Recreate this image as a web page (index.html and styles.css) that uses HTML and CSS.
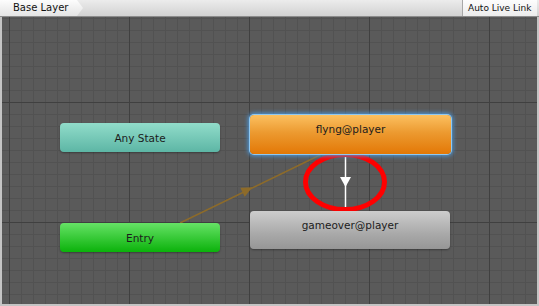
FILE: index.html
```html
<!DOCTYPE html>
<html>
<head>
  <title>Animator - Base Layer</title>
  <link rel="stylesheet" href="styles.css">
</head>
<body>
  <div class="window">
    <div class="toolbar">
      <div class="tab">Base Layer</div>
      <div class="live-link">Auto Live Link</div>
    </div>
    <div class="canvas">
      <svg class="links" width="535" height="287">
        <!-- entry -> flyng transition -->
        <line x1="178" y1="206" x2="318" y2="138" stroke="#8d6b2a" stroke-width="1.5"/>
        <polygon points="-5,-5 6,0 -5,5" fill="#8d6b2a" transform="translate(245 173) rotate(-26)"/>
        <!-- flyng -> gameover transition -->
        <line x1="343.5" y1="137" x2="343.5" y2="194" stroke="#ffffff" stroke-width="1.5"/>
        <polygon points="338,160 349,160 343.5,170" fill="#ffffff"/>
        <ellipse cx="343" cy="165" rx="39.5" ry="27.5" fill="none" stroke="#ff0000" stroke-width="5"/>
      </svg>
      <div class="node any-state">Any State</div>
      <div class="node entry">Entry</div>
      <div class="node state selected">flyng@player</div>
      <div class="node state gameover">gameover@player</div>
    </div>
  </div>
</body>
</html>
```
FILE: styles.css
```css
html, body {
  margin: 0;
  height: 100%;
}

body {
  font-family: "Lucida Grande", "DejaVu Sans", sans-serif;
  background-color: #c4c4c4;
}

.window {
  display: flex;
  flex-direction: column;
  height: 306px;
  width: 539px;
}

.toolbar {
  display: flex;
  justify-content: space-between;
  height: 17px;
  background: linear-gradient(#ececec, #d2d2d2);
  border-bottom: 1px solid #8c8c8c;
  box-sizing: border-box;
}

.tab {
  width: 70px;
  padding: 0 13px 0 13px;
  font-size: 10px;
  line-height: 16px;
  color: #111;
  background: linear-gradient(#fdfdfd, #e4e4e4);
  clip-path: polygon(0 0, 77px 0, 83px 8px, 77px 16px, 0 16px);
}

.live-link {
  width: 75px;
  margin-right: 2px;
  box-sizing: border-box;
  padding-left: 5px;
  font-size: 9px;
  line-height: 16px;
  color: #111;
  background: linear-gradient(#fdfdfd, #ececec);
  border-left: 1px solid #a8a8a8;
}

.canvas {
  position: relative;
  flex: 1;
  border: 2px solid #c4c4c4;
  border-top: none;
  background-color: #5a5a5a;
  background-image:
    linear-gradient(90deg, #404040 1px, transparent 1px),
    linear-gradient(#404040 1px, transparent 1px),
    linear-gradient(90deg, #525252 1px, transparent 1px),
    linear-gradient(#525252 1px, transparent 1px);
  background-size: 120px 120px, 120px 120px, 12px 12px, 12px 12px;
  background-position: 7px 0, 0 85px, 7px 0, 0 1px;
  overflow: hidden;
}

.links {
  position: absolute;
  left: 0;
  top: 0;
}

.node {
  position: absolute;
  display: flex;
  align-items: center;
  justify-content: center;
  box-sizing: border-box;
  border-radius: 4px;
  font-size: 10.5px;
  color: #1c1c1c;
  box-shadow: 0 1px 2px rgba(0, 0, 0, 0.35);
}

.any-state {
  left: 58px;
  top: 106px;
  width: 160px;
  height: 29px;
  background: linear-gradient(#91dcca, #5db6a5);
}

.entry {
  left: 58px;
  top: 206px;
  width: 160px;
  height: 29px;
  background: linear-gradient(#66e266, #0bb20b);
}

.state {
  width: 201px;
  padding-bottom: 12px;
}

.selected {
  left: 248px;
  top: 98px;
  height: 39px;
  background: linear-gradient(#fcc060, #ec9a30 45%, #e37806);
  box-shadow: 0 0 0 1px #8fc8f2, 0 0 4px 2px #4a98dc;
}

.gameover {
  left: 248px;
  top: 194px;
  height: 38px;
  width: 200px;
  padding-bottom: 10px;
  background: linear-gradient(#cdcdcd, #a9a9a9 60%, #969696);
}
```
